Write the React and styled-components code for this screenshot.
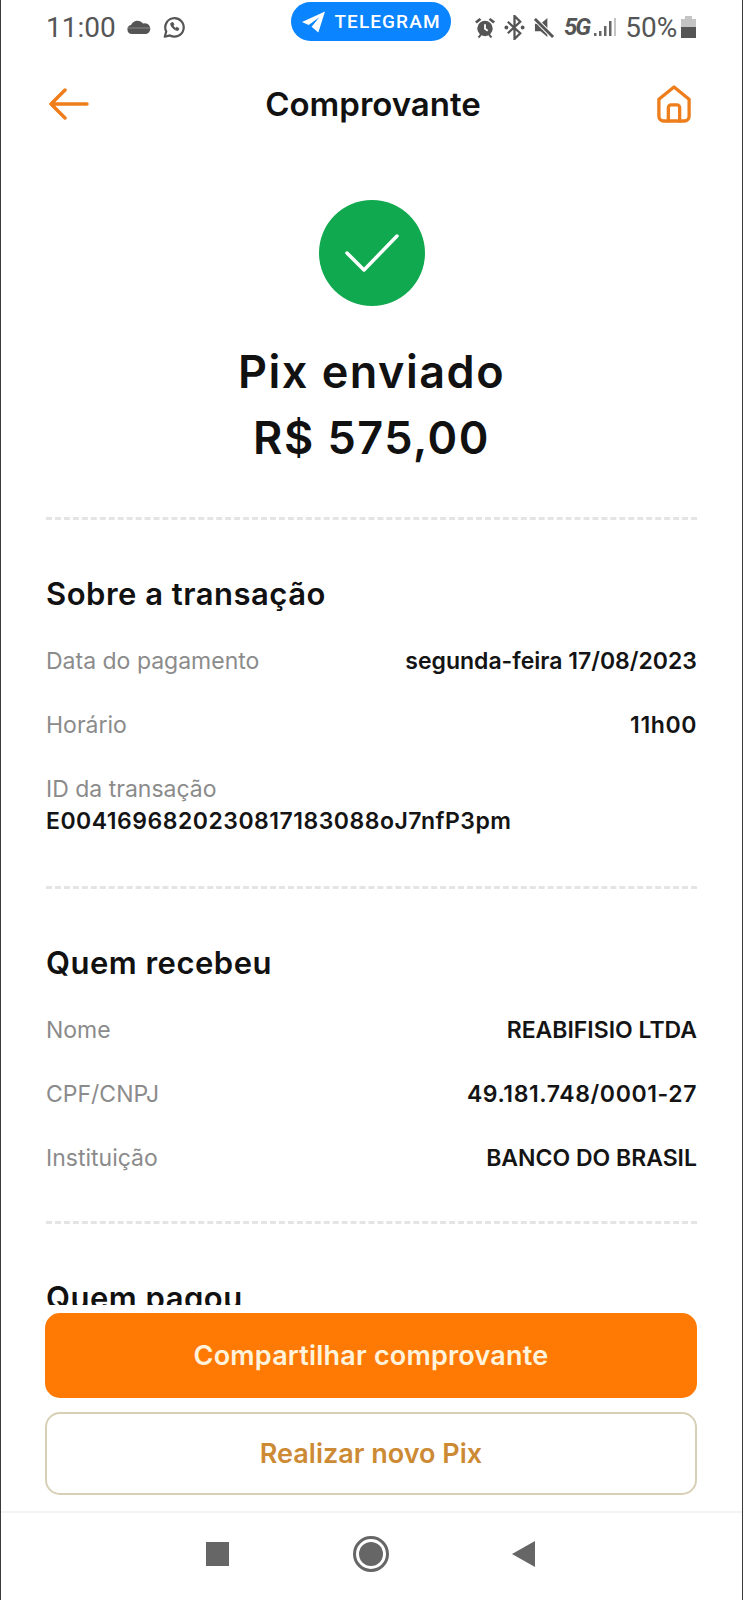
import React from 'react'
import styled, { createGlobalStyle } from 'styled-components'

const GlobalStyle = createGlobalStyle`
  html, body {
    margin: 0;
    padding: 0;
    background: #ffffff;
  }
  * {
    box-sizing: border-box;
  }
`

const Screen = styled.div`
  width: 743px;
  height: 1600px;
  display: flex;
  flex-direction: column;
  overflow: hidden;
  background: #ffffff;
  border-left: 1px solid #3a3a3a;
  border-right: 1px solid #3a3a3a;
  font-family: Inter, 'Liberation Sans', sans-serif;
`

const StatusBar = styled.div`
  height: 52px;
  padding: 2px 44px 0 45px;
  display: flex;
  align-items: flex-start;
  flex-shrink: 0;
`

const StatusLeft = styled.div`
  width: 245px;
  height: 50px;
  display: flex;
  align-items: center;
  gap: 10px;
`

const Time = styled.span`
  font-family: Roboto, sans-serif;
  font-size: 28px;
  color: #555555;
`

const Pill = styled.div`
  width: 160px;
  height: 39px;
  display: flex;
  align-items: center;
  justify-content: center;
  gap: 8px;
  border-radius: 20px;
  background: #0a84ff;
  font-family: Roboto, sans-serif;
  font-size: 19px;
  font-weight: 500;
  letter-spacing: 1.1px;
  color: #ffffff;
`

const StatusRight = styled.div`
  flex: 1;
  height: 50px;
  padding-left: 24px;
  display: flex;
  align-items: center;
  gap: 9px;
  font-family: Roboto, sans-serif;
  color: #555555;
`

const Percent = styled.span`
  font-size: 28px;
  margin-right: -5px;
`

const FiveG = styled.span`
  font-size: 24px;
  font-weight: 700;
  font-style: italic;
  letter-spacing: -2px;
  margin-right: -4px;
`

const Header = styled.div`
  height: 104px;
  padding: 0 51px 0 48px;
  display: flex;
  align-items: center;
  justify-content: space-between;
  flex-shrink: 0;
`

const Title = styled.h1`
  margin: 0;
  font-size: 33px;
  font-weight: 600;
  color: #111111;
`

const Scroll = styled.div`
  flex: 1;
  min-height: 0;
  overflow: hidden;
  padding: 44px 45px 0 45px;
`

const Hero = styled.div`
  display: flex;
  flex-direction: column;
  align-items: center;
  padding-bottom: 46px;
  border-bottom: 3px dashed #e4e4e4;
`

const Circle = styled.div`
  width: 106px;
  height: 106px;
  margin-bottom: 33px;
  border-radius: 50%;
  background: #10a94f;
  display: flex;
  align-items: center;
  justify-content: center;
`

const HeroText = styled.div`
  font-size: 45px;
  line-height: 66px;
  letter-spacing: 1.5px;
  font-weight: 600;
  color: #111111;
  text-align: center;
`

const Section = styled.section`
  padding: 56px 0 ${(props) => (props.$last ? '0' : '31px')};
  border-bottom: ${(props) => (props.$last ? 'none' : '3px dashed #e4e4e4')};
`

const SectionTitle = styled.h2`
  margin: 0 0 17px;
  font-size: 31px;
  line-height: 36px;
  letter-spacing: 0.5px;
  font-weight: 600;
  color: #111111;
`

const Row = styled.div`
  height: 64px;
  display: flex;
  align-items: center;
  justify-content: space-between;
`

const StackRow = styled.div`
  padding: 18px 0 20px;
  display: flex;
  flex-direction: column;
  gap: 4px;
`

const Label = styled.span`
  font-size: 23px;
  line-height: 28px;
  color: #8b8b8b;
`

const Value = styled.span`
  font-size: 23px;
  line-height: 28px;
  font-weight: 600;
  letter-spacing: ${(props) => props.$spacing || 0}px;
  color: #141414;
`

const Footer = styled.div`
  height: 206px;
  padding: 8px 45px 0 44px;
  display: flex;
  flex-direction: column;
  gap: 14px;
  flex-shrink: 0;
  background: #ffffff;
`

const Button = styled.div`
  height: ${(props) => props.$height}px;
  display: flex;
  align-items: center;
  justify-content: center;
  border-radius: 15px;
  border: 2px solid ${(props) => (props.$outline ? '#d8d0b6' : '#ff7a05')};
  background: ${(props) => (props.$outline ? '#ffffff' : '#ff7a05')};
  color: ${(props) => (props.$outline ? '#cd8a35' : '#fff3dc')};
  font-size: 27px;
  letter-spacing: ${(props) => (props.$outline ? 0 : 0.2)}px;
  font-weight: 600;
`

const NavBar = styled.div`
  height: 89px;
  padding: 0 207px 6px 205px;
  display: flex;
  align-items: center;
  justify-content: space-between;
  flex-shrink: 0;
  border-top: 2px solid #f4f4f4;
`

const NavSquare = styled.div`
  width: 23px;
  height: 24px;
  background: #666666;
`

const NavCircle = styled.div`
  width: 36px;
  height: 36px;
  border-radius: 50%;
  border: 3px solid #666666;
  display: flex;
  align-items: center;
  justify-content: center;

  &::after {
    content: '';
    width: 24px;
    height: 24px;
    border-radius: 50%;
    background: #666666;
  }
`

const NavTriangle = styled.div`
  width: 0;
  height: 0;
  border-top: 13px solid transparent;
  border-bottom: 13px solid transparent;
  border-right: 23px solid #666666;
`

const Cloud = () => (
  <svg width="26" height="16" viewBox="0 0 26 16" fill="#555555">
    <path d="M6 15a4.500 4.500 0 0 1-1-8.900A7 7 0 0 1 17 4.500a5 5 0 0 1 3.500 10.500z" />
    <path d="M2 9h22" stroke="#8a8a8a" strokeWidth="1" />
  </svg>
)

const Whatsapp = () => (
  <svg width="24" height="25" viewBox="0 0 26 26" fill="none" stroke="#555555" strokeWidth="2.400">
    <path d="M3 23l1.600-5.600A10 10 0 1 1 8.600 21.600z" strokeLinejoin="round" />
    <path d="M9.500 8.500c-.8 3 4.500 8.500 8 7.500l.8-2-2.600-1.200-1 1c-1.200-.5-2.200-1.500-2.700-2.800l1-1-1.200-2.500z" fill="#555555" strokeWidth="1" />
  </svg>
)

const TelegramPlane = () => (
  <svg width="25" height="24" viewBox="0 0 26 24" fill="#ffffff">
    <path d="M25 1L1 12l7 3 11-8-8 10v0l7 6z" />
  </svg>
)

const Alarm = () => (
  <svg width="20" height="21" viewBox="0 0 22 23" fill="#555555">
    <circle cx="11" cy="12.500" r="8.500" />
    <path d="M0 5l5-4 2 2-5 4zM22 5l-5-4-2 2 5 4z" />
    <path d="M3 22l3-4 2 1-3 4zM19 22l-3-4-2 1 3 4z" />
    <path d="M11 8v5l3 2" stroke="#ffffff" strokeWidth="2" fill="none" />
  </svg>
)

const Bluetooth = () => (
  <svg width="21" height="25" viewBox="0 0 22 26" fill="none" stroke="#555555" strokeWidth="2.400">
    <path d="M4 7l13 12-6 6V1l6 6L4 19" />
    <circle cx="2.500" cy="13" r="2" fill="#555555" stroke="none" />
    <circle cx="19.500" cy="13" r="2" fill="#555555" stroke="none" />
  </svg>
)

const Muted = () => (
  <svg width="21" height="23" viewBox="0 0 22 24" fill="#555555">
    <path d="M1 8h6l7-6v20l-7-6H1z" />
    <path d="M1 3l19 19" stroke="#ffffff" strokeWidth="5" />
    <path d="M1 3l19 19" stroke="#555555" strokeWidth="3" />
  </svg>
)

const Signal = () => (
  <svg width="22" height="22" viewBox="0 0 22 22" fill="#666666">
    <rect x="0" y="17" width="2.500" height="3" />
    <rect x="5" y="15" width="2.500" height="5" />
    <rect x="10" y="10" width="2.500" height="10" />
    <rect x="15" y="5" width="2.500" height="15" />
    <rect x="20" y="2" width="2" height="18" fill="#c4c4c4" />
  </svg>
)

const Battery = () => (
  <svg width="15" height="22" viewBox="0 0 15 22">
    <path d="M4 0h7v3h4v19H0V3h4z" fill="#c4c4c4" />
    <path d="M0 11h15v11H0z" fill="#555555" />
  </svg>
)

const BackArrow = () => (
  <svg width="40" height="32" viewBox="0 0 40 32" fill="none" stroke="#ee7d1c" strokeWidth="3.500" strokeLinecap="round" strokeLinejoin="round">
    <path d="M38 16H2M16 2L2 16l14 14" />
  </svg>
)

const HomeIcon = () => (
  <svg width="34" height="40" viewBox="0 0 36 40" fill="none" stroke="#ee7d1c" strokeWidth="3.500" strokeLinecap="round" strokeLinejoin="round">
    <path d="M2 15L18 2l16 13v18a5 5 0 0 1-5 5H7a5 5 0 0 1-5-5z" />
    <path d="M12 38V24a3 3 0 0 1 3-3h6a3 3 0 0 1 3 3v14" />
  </svg>
)

const Check = () => (
  <svg width="54" height="38" viewBox="0 0 54 38" fill="none" stroke="#ffffff" strokeWidth="3.500" strokeLinecap="round" strokeLinejoin="round">
    <path d="M2 19l17 17L52 2" />
  </svg>
)

const App = () => (
  <>
    <GlobalStyle />
    <Screen>
      <StatusBar>
        <StatusLeft>
          <Time>11:00</Time>
          <Cloud />
          <Whatsapp />
        </StatusLeft>
        <Pill>
          <TelegramPlane />
          TELEGRAM
        </Pill>
        <StatusRight>
          <Alarm />
          <Bluetooth />
          <Muted />
          <FiveG>5G</FiveG>
          <Signal />
          <Percent>50%</Percent>
          <Battery />
        </StatusRight>
      </StatusBar>
      <Header>
        <BackArrow />
        <Title>Comprovante</Title>
        <HomeIcon />
      </Header>
      <Scroll>
        <Hero>
          <Circle>
            <Check />
          </Circle>
          <HeroText>
            Pix enviado
            <br />
            R$ 575,00
          </HeroText>
        </Hero>
        <Section>
          <SectionTitle>Sobre a transação</SectionTitle>
          <Row>
            <Label>Data do pagamento</Label>
            <Value>segunda-feira 17/08/2023</Value>
          </Row>
          <Row>
            <Label>Horário</Label>
            <Value $spacing={0.6}>11h00</Value>
          </Row>
          <StackRow>
            <Label>ID da transação</Label>
            <Value $spacing={0.5}>E0041696820230817183088oJ7nfP3pm</Value>
          </StackRow>
        </Section>
        <Section>
          <SectionTitle>Quem recebeu</SectionTitle>
          <Row>
            <Label>Nome</Label>
            <Value>REABIFISIO LTDA</Value>
          </Row>
          <Row>
            <Label>CPF/CNPJ</Label>
            <Value $spacing={0.6}>49.181.748/0001-27</Value>
          </Row>
          <Row>
            <Label>Instituição</Label>
            <Value>BANCO DO BRASIL</Value>
          </Row>
        </Section>
        <Section $last>
          <SectionTitle>Quem pagou</SectionTitle>
        </Section>
      </Scroll>
      <Footer>
        <Button $height={85}>Compartilhar comprovante</Button>
        <Button $height={83} $outline>
          Realizar novo Pix
        </Button>
      </Footer>
      <NavBar>
        <NavSquare />
        <NavCircle />
        <NavTriangle />
      </NavBar>
    </Screen>
  </>
)

export default App
